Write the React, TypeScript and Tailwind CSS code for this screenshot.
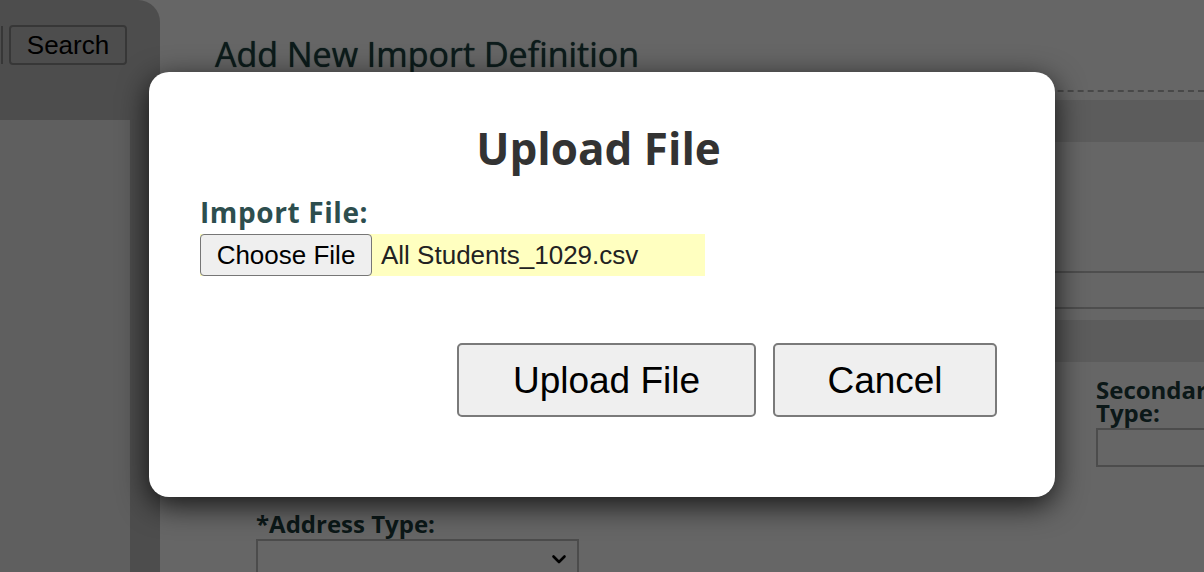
import React from 'react';

const trebuchet = { fontFamily: '"Open Sans", "DejaVu Sans", sans-serif' };
const helvetica = { fontFamily: '"Liberation Sans", Arial, sans-serif' };

function Sidebar() {
    return (
        <aside className="w-[160px] shrink-0 bg-[#c1c1c1] rounded-tr-[22px] flex flex-col pt-[25px]">
            <div className="flex items-center h-[40px]">
                <div className="w-[3px] h-[38px] border-r-2 border-[#8a8a8a]" />
                <button
                    className="ml-[6px] w-[118px] h-[40px] border-2 border-[#8a8a8a] rounded-[4px] text-[26px] leading-none text-black"
                    style={helvetica}
                >
                    Search
                </button>
            </div>
            <div className="mt-[55px] w-[130px] flex-1 bg-[#eeeeee]" />
        </aside>
    );
}

function PageBehind() {
    return (
        <main className="flex-1 flex flex-col min-w-0" style={trebuchet}>
            {/* Header */}
            <div className="ml-[55px] pt-[34px] pb-[16px] border-b-2 border-dashed border-[#b5b5b5]">
                <h1 className="text-[34px] leading-[40px] text-[#1f4444] [text-shadow:0_0_1px_#1f4444]">
                    Add New Import Definition
                </h1>
            </div>

            <div className="ml-[40px] flex flex-col">
                <div className="mt-[8px] h-[42px] bg-[#e6e6e6]" />
                <div className="h-[129px]" />
                <div className="ml-[460px] h-[38px] border-y-2 border-[#c4c4c4]" />
                <div className="h-[11px]" />
                <div className="h-[42px] bg-[#e6e6e6]" />

                {/* Form fields */}
                <div className="flex pt-[16px]">
                    <div className="w-[896px] shrink-0 pl-[56px] flex flex-col">
                        <div className="h-[133px]" />
                        <label className="text-[24px] leading-[26px] font-bold text-[#1c3c3c]">*Address Type:</label>
                        <div className="mt-[2px] w-[323px] h-[40px] border-2 border-[#bdbdbd] flex items-center justify-end pr-[10px]">
                            <svg width="16" height="16" viewBox="0 0 16 16" fill="none">
                                <path d="M2.5 5.5 L8 11 L13.5 5.5" stroke="#000" strokeWidth="2.6" strokeLinecap="round" strokeLinejoin="round" />
                            </svg>
                        </div>
                    </div>
                    <div className="w-[170px] shrink-0 flex flex-col">
                        <label className="text-[24px] leading-[23px] font-bold text-[#1c3c3c]">Secondary Type:</label>
                        <div className="mt-[4px] w-[170px] h-[39px] border-2 border-[#bdbdbd]" />
                    </div>
                </div>
            </div>
        </main>
    );
}

function UploadModal() {
    return (
        <div className="w-[906px] h-[425px] bg-white rounded-[20px] shadow-[0_8px_30px_rgba(0,0,0,0.8)] flex flex-col pt-[50px] pl-[51px] pr-[58px]">
            <h2 className="text-center text-[44px] leading-[52px] font-bold text-[#333333]" style={trebuchet}>
                Upload File
            </h2>

            <label className="mt-[22px] text-[28px] leading-[32px] font-bold text-[#2d4e4e] tracking-[0.6px]" style={trebuchet}>
                Import File:
            </label>

            <div className="mt-[6px] w-[505px] h-[42px] bg-[#ffffc0] flex items-center" style={helvetica}>
                <button className="w-[172px] h-[42px] bg-[#efefef] border border-[#767676] rounded-[4px] text-[26px] leading-none text-black">
                    Choose File
                </button>
                <span className="ml-[9px] text-[26px] leading-none text-[#222]">All Students_1029.csv</span>
            </div>

            <div className="mt-[67px] flex justify-end gap-[17px]" style={helvetica}>
                <button className="w-[299px] h-[74px] bg-[#efefef] border-2 border-[#7a7a7a] rounded-[5px] text-[37px] leading-none text-black">
                    Upload File
                </button>
                <button className="w-[224px] h-[74px] bg-[#efefef] border-2 border-[#7a7a7a] rounded-[5px] text-[37px] leading-none text-black">
                    Cancel
                </button>
            </div>
        </div>
    );
}

export default function App() {
    return (
        <div className="relative w-full h-[572px] overflow-hidden bg-white flex">
            <Sidebar />
            <PageBehind />

            {/* Overlay */}
            <div className="absolute inset-0 bg-black/60 flex justify-center pt-[72px]">
                <UploadModal />
            </div>
        </div>
    );
}
